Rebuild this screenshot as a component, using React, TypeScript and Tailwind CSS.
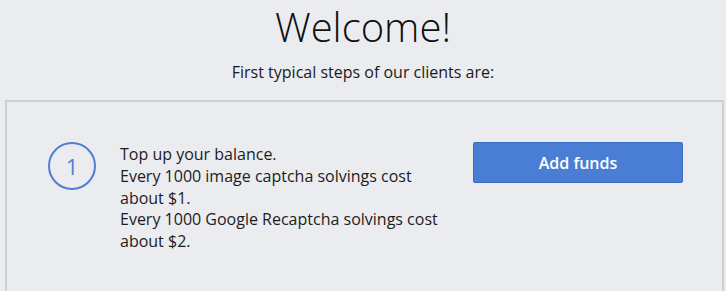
export default function App() {
  return (
    <div className="min-h-screen bg-[#ebecf0] text-[#1a1a1a]" style={{ fontFamily: '"Open Sans", sans-serif' }}>
      <div className="pt-[3px] text-center">
        <h1 className="text-[40px] leading-[48px] font-light text-[#111]">Welcome!</h1>
        <p className="mt-[10px] text-[16px] leading-[22px]">First typical steps of our clients are:</p>
      </div>
      <div className="mt-[17px] ml-[5px] mr-[2px] border-2 border-[#cfd0d4] pt-[40px] pb-[40px] pl-[41px]">
        <div className="flex items-start">
          <div className="flex h-[48px] w-[48px] shrink-0 items-center justify-center rounded-full border-2 border-[#4f80cf] text-[22px] text-[#4f80cf]">
            1
          </div>
          <p className="ml-[24px] mt-[2px] w-[336px] text-[16px] leading-[21.75px] text-[#1c1c1c]">
            Top up your balance.
            <br />
            Every 1000 image captcha solvings cost about $1.
            <br />
            Every 1000 Google Recaptcha solvings cost about $2.
          </p>
          <button className="ml-[17px] h-[41px] w-[210px] rounded-[2px] border border-[#3a6cc0] bg-[#4a7ed5] pt-[1px] text-[16px] font-semibold text-white">
            Add funds
          </button>
        </div>
      </div>
    </div>
  )
}
